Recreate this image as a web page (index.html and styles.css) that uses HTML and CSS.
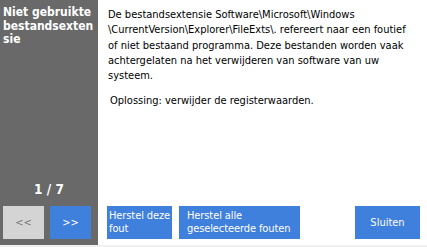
FILE: index.html
```html
<!DOCTYPE html>
<html>
<head>
<meta charset="utf-8">
<link rel="stylesheet" href="styles.css">
</head>
<body>
<div class="window">
  <div class="sidebar">
    <div class="title">Niet gebruikte bestandsextensie</div>
    <div class="counter">1 / 7</div>
    <div class="nav">
      <div class="btn btn-disabled">&lt;&lt;</div>
      <div class="btn btn-blue">&gt;&gt;</div>
    </div>
  </div>
  <div class="main">
    <div class="desc">De bestandsextensie Software\Microsoft\Windows \CurrentVersion\Explorer\FileExts\. refereert naar een foutief of niet bestaand programma. Deze bestanden worden vaak achtergelaten na het verwijderen van software van uw systeem.</div>
    <div class="solution">Oplossing: verwijder de registerwaarden.</div>
    <div class="actions">
      <div class="btn btn-blue btn-left btn-fix"><span class="nowrap">Herstel deze</span> fout</div>
      <div class="btn btn-blue btn-left btn-fixall">Herstel alle geselecteerde fouten</div>
      <div class="spacer"></div>
      <div class="btn btn-blue btn-close">Sluiten</div>
    </div>
  </div>
</div>
</body>
</html>
```
FILE: styles.css
```css
html, body {
  margin: 0;
  padding: 0;
  background: #f0f0f0;
}
.window {
  width: 427px;
  height: 245px;
  display: flex;
  font-family: "DejaVu Sans Condensed", "DejaVu Sans", sans-serif;
  font-size: 11px;
}
.sidebar {
  width: 98px;
  background: #696969;
  color: #ffffff;
  display: flex;
  flex-direction: column;
  padding: 6px 0 6px 0;
  box-sizing: border-box;
}
.title {
  font-weight: bold;
  font-size: 12px;
  line-height: 13.5px;
  padding: 0 3px;
  word-break: break-all;
}
.counter {
  margin-top: auto;
  text-align: center;
  font-weight: bold;
  font-size: 13.5px;
  line-height: 16px;
  margin-bottom: 9px;
}
.nav {
  display: flex;
  gap: 6px;
  padding: 0 6px 0 3px;
}
.btn {
  height: 33px;
  display: flex;
  align-items: center;
  justify-content: center;
  box-sizing: border-box;
  line-height: 13px;
}
.nav .btn {
  width: 41px;
}
.btn-disabled {
  background: #d4d4d4;
  color: #7a7a7a;
}
.btn-blue {
  background: #3f80dc;
  color: #ffffff;
}
.main {
  flex: 1;
  background: #ffffff;
  display: flex;
  flex-direction: column;
  padding: 7px 14px 6px 9px;
  color: #000000;
}
.desc {
  line-height: 15.3px;
  padding-left: 1px;
}
.solution {
  margin-top: 10px;
  padding-left: 3px;
  line-height: 15px;
}
.actions {
  margin-top: auto;
  margin-right: -7px;
  display: flex;
  gap: 7px;
}
.btn-left {
  display: block;
  padding: 3px 0 0 2px;
  text-align: left;
  letter-spacing: -0.1px;
}
.nowrap {
  white-space: nowrap;
}
.btn-fix {
  width: 65px;
}
.btn-fixall {
  width: 121px;
  padding-left: 8px;
}
.spacer {
  flex: 1;
}
.btn-close {
  width: 65px;
}
```
